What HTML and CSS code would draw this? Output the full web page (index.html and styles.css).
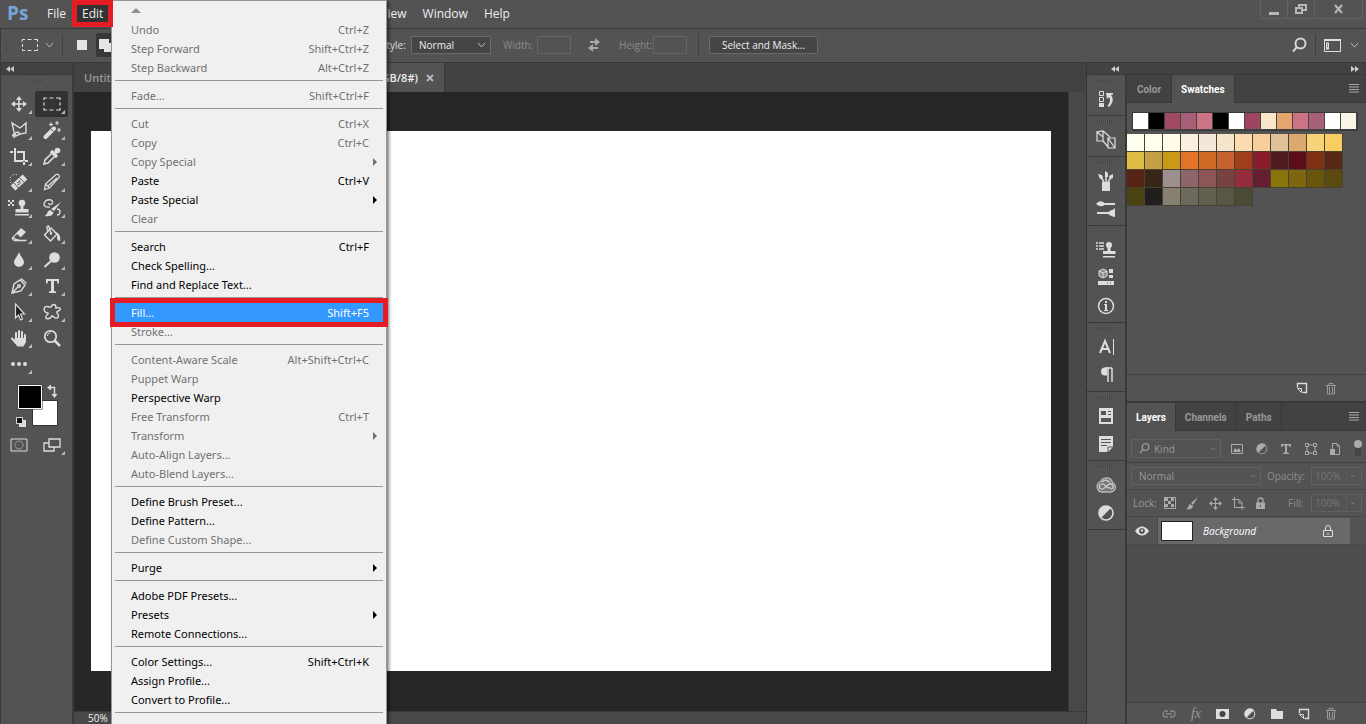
FILE: index.html
```
<!DOCTYPE html>
<html lang="en">
<head>
<meta charset="utf-8">
<title>Photoshop</title>
<link rel="stylesheet" href="styles.css">
</head>
<body>
<div class="app">
  <header class="menubar">
    <span class="brand">Ps</span>
    <nav class="menus">
      <button class="menu-name">File</button>
      <button class="menu-name open">Edit</button>
      <span class="menu-space"></span>
      <button class="menu-name">View</button>
      <button class="menu-name">Window</button>
      <button class="menu-name">Help</button>
    </nav>
    <div class="window-buttons">
      <button aria-label="Minimize"><svg width="12" height="14"><path d="M1 11.500h10" stroke="#b8b8b8" stroke-width="3"/></svg></button>
      <button aria-label="Restore"><svg width="14" height="14" fill="none" stroke="#b8b8b8" stroke-width="2"><path d="M5 6V3h7v5h-3M2 6h6v5H2z"/></svg></button>
      <button class="close" aria-label="Close"><svg width="12" height="12"><path d="M2 2l7 8M9 2l-7 8" stroke="#b8b8b8" stroke-width="2"/></svg></button>
    </div>
  </header>

  <div class="options">
    <div class="options-left">
      <span class="grip-v"></span>
      <button class="tool-preset" aria-label="Marquee preset"><svg width="18" height="14"><path d="M1 4V1.500h3M6.500 1.500h4M13 1.500h3.500V4M16.500 6v3M16.500 11v1.500H13M10.500 12.500h-4M4 12.500H1.500V11M1.500 9V6" fill="none" stroke="#ddd"/></svg><svg width="9" height="6"><path d="M1 1l3.500 4L8 1" fill="none" stroke="#bbb"/></svg></button>
      <span class="rule"></span>
      <button class="sel-mode" aria-label="New selection"><svg width="10" height="10"><path d="M0 0h10v10H0z" fill="#e6e6e6"/></svg></button>
      <button class="sel-mode active" aria-label="Add to selection"><svg width="16" height="16"><path d="M0 2h10v4h4v9H5v-3H0z" fill="#e6e6e6"/></svg></button>
    </div>
    <label for="style">Style:</label>
    <span class="select style-select"><select id="style"><option>Normal</option></select><svg width="9" height="6"><path d="M1 1l3.500 4L8 1" fill="none" stroke="#bbb"/></svg></span>
    <label class="dim" for="w">Width:</label><input class="size-box" id="w" type="text" disabled>
    <button class="swap" aria-label="Swap width and height"><svg width="16" height="14" fill="#a8a8a8"><path d="M4 3h5V0l5 4-5 4V5H4zM12 9H7V6l-5 4 5 4v-3h5z"/></svg></button>
    <label class="dim" for="h">Height:</label><input class="size-box" id="h" type="text" disabled>
    <span class="rule mask-rule"></span>
    <button class="mask-button">Select and Mask...</button>
    <div class="options-right">
      <button aria-label="Search"><svg width="16" height="16" fill="none" stroke="#d6d6d6" stroke-width="2"><circle cx="9.500" cy="6.500" r="5"/><path d="M6 10l-4 4.500"/></svg></button>
      <span class="rule"></span>
      <button class="workspace" aria-label="Workspace"><svg width="17" height="13"><path d="M.5 1h16v11.500H.5z" fill="none" stroke="#ddd"/><path d="M0 0h17v2H0z" fill="#ddd"/><path d="M2 3.500h3v7H2z" fill="#ddd"/><path d="M3 5.500h1M3 7.500h1" stroke="#555"/></svg></button>
      <svg width="9" height="6"><path d="M1 1l3.500 4L8 1" fill="none" stroke="#bbb"/></svg>
    </div>
  </div>

  <div class="body">
    <aside class="tools">
      <div class="collapse left"><svg width="8" height="6" fill="#ccc"><path d="M4 0v6L0 3zM8 0v6L4 3z"/></svg></div>
      <span class="grip"></span>
      <div class="tool-grid">
        <button class="tool" aria-label="Move"><svg viewBox="0 0 18 18"><path d="M9 3v12M3 9h12" stroke="#ddd" stroke-width="1.500"/><path d="M9 1l3 4H6zM9 17l3-4H6zM1 9l4-3v6zM17 9l-4-3v6z" fill="#ddd"/></svg></button>
        <button class="tool active" aria-label="Marquee"><svg viewBox="0 0 18 18"><path d="M1 5V3h3M6.500 3h4M13 3h4v2M17 7.500v3M17 13v2h-4M10.500 15h-4M4 15H1v-2M1 10.500v-3" fill="none" stroke="#ddd" stroke-width="1.200"/></svg></button>
        <button class="tool" aria-label="Polygonal lasso"><svg viewBox="0 0 18 18" fill="none" stroke="#ddd" stroke-width="1.400"><path d="M4 11L2 2l8 5 6-5v10l-6 1-2-2-4 1-1 2 3 1 4-2M6 11l-2 6M5 14l-3 1"/></svg></button>
        <button class="tool" aria-label="Magic wand"><svg viewBox="0 0 18 18"><path d="M2.500 16L11 7.500" stroke="#ddd" stroke-width="4" stroke-linecap="round"/><path d="M8 8l2.500 2.500" stroke="#555"/><path d="M8 1.500v4M6 3.500h4M14 0v4M12 2h4M16 7v4M14 9h4" stroke="#ddd" stroke-width="1.200"/></svg></button>
        <button class="tool" aria-label="Crop"><svg viewBox="0 0 18 18"><path d="M5 1v13h8M7 5h7v9" fill="none" stroke="#ddd" stroke-width="2"/><path d="M0 5h3M14 15v3M15 14h3" stroke="#ddd" stroke-width="2"/></svg></button>
        <button class="tool" aria-label="Eyedropper"><svg viewBox="0 0 18 18"><path d="M9 6L2 13l-1 4 4-1 7-7" fill="none" stroke="#ddd" stroke-width="1.600"/><path d="M8 4l6 6M11 7l4-4" stroke="#ddd" stroke-width="3.200"/><circle cx="14.500" cy="3.500" r="2.800" fill="#ddd"/></svg></button>
        <button class="tool" aria-label="Healing brush"><svg viewBox="0 0 18 18"><path d="M3 15L15 4" stroke="#ddd" stroke-width="7"/><path d="M4 10l4.500 5M9.500 4.500l4.500 5" stroke="#555"/><path d="M8 9.500h.1M10 10h.1M9.500 8h.1M8.500 11.500h.1" stroke="#555" stroke-width="1.600" stroke-linecap="round"/><path d="M1 10C-2 4 3 0 8 2" fill="none" stroke="#ddd" stroke-dasharray="1 1.500"/></svg></button>
        <button class="tool" aria-label="Pencil"><svg viewBox="0 0 18 18" fill="none" stroke="#ddd" stroke-width="1.300"><path d="M1.500 16.500l1-5.500L13 1.500c2-1 4 1 3 3L6.500 15zM2.500 11l4 4M5 13L14 5"/></svg></button>
        <button class="tool" aria-label="Clone stamp"><svg class="wide" viewBox="0 0 22 18"><circle cx="14" cy="4" r="3.300" fill="#ddd"/><path d="M12.500 6h3v4h5v3.500h-13V10h5zM7 15h14v1.500H7z" fill="#ddd"/><path d="M0 1h2v2H0zM4 1h2v2H4zM2 3h2v2H2zM0 5h2v2H0zM4 5h2v2H4z" fill="#ddd"/></svg></button>
        <button class="tool" aria-label="History brush"><svg viewBox="0 0 18 18"><path d="M18 3l-7 9-3-2z" fill="#ddd"/><path d="M7 11l3.500 2.500c-1 4-5 4-9 3.500 3-1 2.500-5 5.500-6z" fill="#ddd"/><path d="M7 8C2 9 0 6 1.500 3.500c2-4 9-3.500 8 .5-1 2-4 2-4 0M14 10c4 0 4 6 0 6" fill="none" stroke="#ddd" stroke-width="1.300"/></svg></button>
        <button class="tool" aria-label="Eraser"><svg viewBox="0 0 18 18"><path d="M2.500 12L11 3l5 4-8 8H5z" fill="#ddd"/><path d="M4 12l3-3 4 3.500-2 1.500H6z" fill="#555"/><path d="M2.500 12v2l2 1.500h12" fill="none" stroke="#ddd" stroke-width="1.300"/></svg></button>
        <button class="tool" aria-label="Paint bucket"><svg viewBox="0 0 18 18"><path d="M1.500 10L8 3l6 6-6.500 7zM8 8L5.500 1C3 1 4 4 5 6" fill="none" stroke="#ddd" stroke-width="1.400"/><circle cx="8" cy="8.500" r="1.300" fill="#ddd"/><path d="M11 7c5 0 7 4 6 9-3 0-3-3-3-6z" fill="#ddd"/></svg></button>
        <button class="tool" aria-label="Blur"><svg viewBox="0 0 18 18"><path d="M9 1c1 4 5 7 5 10a5 5 0 0 1-10 0c0-3 4-6 5-10z" fill="#ddd"/></svg></button>
        <button class="tool" aria-label="Dodge"><svg viewBox="0 0 18 18"><circle cx="11.500" cy="6.500" r="5.300" fill="#ddd"/><path d="M8 10l-6.500 6" stroke="#ddd" stroke-width="2"/></svg></button>
        <button class="tool" aria-label="Pen"><svg viewBox="0 0 18 18" fill="none" stroke="#ddd" stroke-width="1.400"><path d="M2 16l2-9 6-4 5 5-4 6zM2 16l6-6M11 1.500l5.500 5"/><circle cx="9" cy="9" r="1.300"/></svg></button>
        <button class="tool" aria-label="Type"><svg viewBox="0 0 18 18"><path d="M3 2h13v4.500h-1.500L14 4h-3v10l2 .5V16H6v-1.500l2-.5V4H5l-.5 2.500H3z" fill="#ddd"/></svg></button>
        <button class="tool" aria-label="Path selection"><svg viewBox="0 0 18 18"><path d="M5.500 1v14l3-3 2 5 2-1-2-5h4z" fill="#1c1c1c" stroke="#ddd" stroke-width="1.200"/></svg></button>
        <button class="tool" aria-label="Custom shape"><svg viewBox="0 0 18 18"><path d="M2 4c2-2 4 1 6 0 1-3 5-4 5 1 3-1 5 0 4 2-1 1-4 1-3 3 2 2 2 5 0 5-3 1-3-2-5-2-2 3-7 4-6 1 0-2 3-3 2-4-3 0-5-3-3-6z" fill="none" stroke="#ddd" stroke-width="1.400"/></svg></button>
        <button class="tool" aria-label="Hand"><svg viewBox="0 0 18 18"><path d="M6 10V4M9 10V2M12 10V3M15 11V6M6 14L2 9.500" stroke="#ddd" stroke-width="2" stroke-linecap="round"/><path d="M5 9h11v4l-2.500 4.500h-6L4 13z" fill="#ddd"/></svg></button>
        <button class="tool plain" aria-label="Zoom"><svg viewBox="0 0 18 18" fill="none" stroke="#ddd"><circle cx="7.500" cy="7.500" r="5.700" stroke-width="1.700"/><path d="M11.500 11.500L17 17" stroke-width="2.500"/><path d="M4.500 7c0-2 1-3 3-3"/></svg></button>
        <button class="tool" aria-label="More tools"><svg viewBox="0 0 18 18" fill="#ddd"><circle cx="3" cy="9" r="2"/><circle cx="9" cy="9" r="2"/><circle cx="15" cy="9" r="2"/></svg></button>
      </div>
      <svg class="color-chips" width="50" height="46"><path d="M37 4.500h5.500V12" fill="none" stroke="#ddd" stroke-width="1.400"/><path d="M35 4.500l4-3v6zM42.500 15l-3-4h6z" fill="#ddd"/><path d="M20.500 17.500h25v25h-25z" fill="#fff" stroke="#333"/><path d="M5.500 1.500h25v25h-25z" fill="#333"/><path d="M6.500 2.500h23v23h-23z" fill="#000" stroke="#fff"/><path d="M7 37h7v7H7z" fill="#ddd"/><path d="M4.500 34.500h6v6h-6z" fill="#111" stroke="#ddd"/></svg>
      <div class="mode-row">
        <button class="tool plain" aria-label="Quick mask"><svg viewBox="0 0 18 18" fill="none" stroke="#ddd"><path d="M1 3h16v12H1z"/><circle cx="9" cy="9" r="4" stroke-dasharray="1.200 1"/></svg></button>
        <button class="tool" aria-label="Screen mode"><svg viewBox="0 0 18 18" fill="none" stroke="#ddd" stroke-width="1.300"><path d="M6 3h11v8H6zM6 7H1v8h10v-4"/></svg></button>
      </div>
    </aside>

    <main class="document">
      <div class="doc-tabs">
        <button class="doc-tab">Untitled-1 @ 50% (RGB/8#)</button>
        <button class="doc-tab current">Untitled-2 @ 50% (RGB/8#)<svg width="8" height="8"><path d="M1 1l6 6M7 1L1 7" stroke="#b8b8b8" stroke-width="1.800"/></svg></button>
      </div>
      <div class="stage"><div class="viewport"><div class="paper"></div></div><div class="scroll-v"></div></div>
      <div class="status">50%</div>
    </main>

    <aside class="side">
      <div class="side-head"><svg width="8" height="6" fill="#ccc"><path d="M4 0v6L0 3zM8 0v6L4 3z"/></svg><svg width="8" height="6" fill="#ccc"><path d="M0 0v6l4-3zM4 0v6l4-3z"/></svg></div>
      <div class="side-body">
        <div class="dock">
          <div class="dock-group">
            <button aria-label="History"><svg viewBox="0 0 20 20"><path d="M3.500 2.500h4v4h-4zM3.500 8.500h4v4h-4z" fill="none" stroke="#ddd"/><path d="M3 14h5v4H3z" fill="#ddd"/><path d="M10 4h7v1.500l-2 .5c3 4 2 8-2 12l-1.500-1c3-4 3-7 1.500-9L11 10z" fill="#ddd"/></svg></button>
          </div>
          <div class="dock-group">
            <button aria-label="Paths preview"><svg viewBox="0 0 20 20" fill="none" stroke="#ddd" stroke-width="1.200"><path d="M1 2v9h6V7L1 2l6-1 7 6M12 8v10h7L12 8h7v10M7 11l6 7M7 2v5"/></svg></button>
          </div>
          <div class="dock-group">
            <button aria-label="Brush presets"><svg viewBox="0 0 20 20"><path d="M6 11h8v9H6z" fill="#ddd"/><path d="M8 11L5 6M10 11V5M12 11l3-5" stroke="#ddd" stroke-width="1.500"/><path d="M2 3l4 1 1 3-3 1zM9 0l3 2v4H9zM13 5l4-2v4l-3 1z" fill="#ddd"/></svg></button>
            <button aria-label="Brushes"><svg viewBox="0 0 20 20"><path d="M7 5h12M1 14h12" stroke="#ddd" stroke-width="2"/><path d="M0 5c4-4 7-3 9 0-2 3-5 3-9 0zM12 14c1-3 4-2 7-5v9c-3-1-6-1-7-4z" fill="#ddd"/></svg></button>
          </div>
          <div class="dock-group">
            <button aria-label="Clone source"><svg viewBox="0 0 20 20"><circle cx="13" cy="5" r="3" fill="#ddd"/><path d="M11.500 7h3v4h5v3H7v-3h4.500zM7 16h12v1.500H7z" fill="#ddd"/><path d="M0 3h2M3 3h5M0 6h2M3 6h5M0 9h2M3 9h5" stroke="#ddd" stroke-width="1.500"/></svg></button>
            <button aria-label="Libraries"><svg viewBox="0 0 20 20"><path d="M3 3l4-2 4 2v5l-4 2-4-2z" fill="#888" stroke="#ddd"/><path d="M3 3l4 2 4-2M7 5v5" fill="none" stroke="#ddd"/><path d="M13 1h4v4h-4zM13 7h4v3h-4zM2 13h16v4H2z" fill="#ddd"/><path d="M11 15h1M14 15h1" stroke="#555"/></svg></button>
            <button aria-label="Info"><svg viewBox="0 0 20 20"><circle cx="10" cy="10" r="7.500" fill="none" stroke="#ddd" stroke-width="1.500"/><path d="M9 5h2v2H9zM8 8h3v6h1v1H8v-1h1V9H8z" fill="#ddd"/></svg></button>
          </div>
          <div class="dock-group">
            <button aria-label="Character"><svg viewBox="0 0 20 20" fill="none" stroke="#ddd"><path d="M4 16L9 4l5 12M6 12h6" stroke-width="2"/><path d="M17.500 2v16"/></svg></button>
            <button aria-label="Paragraph"><svg viewBox="0 0 20 20"><path d="M16 2.500H9a4 4 0 0 0 0 8h2V3" fill="#ddd"/><path d="M12 3v14M16 3v14M9 3h7" stroke="#ddd" stroke-width="1.500"/></svg></button>
          </div>
          <div class="dock-group">
            <button aria-label="Properties"><svg viewBox="0 0 20 20"><path d="M3 2h14v16H3z" fill="#ddd"/><path d="M5 5h5v4H5zM12 5h3v1h-3zM12 8h3v1h-3zM5 12h10v4H5z" fill="#555"/></svg></button>
            <button aria-label="Notes"><svg viewBox="0 0 20 20"><path d="M3 2h14v11l-5 5H3z" fill="#ddd"/><path d="M5 5.500h10M5 8.500h10M5 11.500h6M12 18v-5h5" fill="none" stroke="#555"/></svg></button>
          </div>
          <div class="dock-group">
            <button aria-label="Creative Cloud"><svg viewBox="0 0 20 20"><path d="M6 17A5.500 5.500 0 0 1 4.500 6.500C8 1 15 2 16.500 7.500 21 10 20 16 15 17z" fill="#777" stroke="#bbb" stroke-width="1.300"/><path d="M15 13c-5 1-6-5-9.500-4C2 10 3 15 7 14c3-1 4-5 7-5 4 0 4 5 1 5M6 7c3-3 6-2 8 1" fill="none" stroke="#ccc" stroke-width="1.300"/></svg></button>
            <button aria-label="Adjustments"><svg viewBox="0 0 20 20"><circle cx="10" cy="10" r="7" fill="none" stroke="#ddd" stroke-width="1.600"/><path d="M15 5A7 7 0 1 0 5 15z" fill="#ddd"/></svg></button>
          </div>
        </div>

        <div class="panels">
          <section class="panel swatches">
            <div class="tabs"><button class="tab color-tab">Color</button><button class="tab on">Swatches</button><svg class="burger" width="10" height="9"><path d="M0 .5h10M0 3h10M0 5.500h10M0 8h10" stroke="#a8a8a8"/></svg></div>
            <div class="recent">
              <i style="background:#fff"></i><i style="background:#000"></i><i style="background:#a04a64"></i><i style="background:#a85f78"></i><i style="background:#cc7486"></i><i style="background:#000"></i><i style="background:#fff"></i><i style="background:#9f4461"></i><i style="background:#f8e6c8"></i><i style="background:#e5a56f"></i><i style="background:#ca7485"></i><i style="background:#a66078"></i><i style="background:#fff"></i><i style="background:#f9f4e6"></i>
            </div>
            <div class="palette">
              <i style="background:#fffff0"></i><i style="background:#fffff0"></i><i style="background:#fffde8"></i><i style="background:#faf0df"></i><i style="background:#f3e8d8"></i><i style="background:#f6e4cb"></i><i style="background:#fadbb2"></i><i style="background:#f8cf9c"></i><i style="background:#e1c199"></i><i style="background:#dba86e"></i><i style="background:#f7d276"></i><i style="background:#facd60"></i>
              <i style="background:#e0bd43"></i><i style="background:#c49f45"></i><i style="background:#cb9818"></i><i style="background:#e17426"></i><i style="background:#d06a26"></i><i style="background:#c5622f"></i><i style="background:#a33e1c"></i><i style="background:#8a1d2b"></i><i style="background:#501c20"></i><i style="background:#5b0d1a"></i><i style="background:#803014"></i><i style="background:#582815"></i>
              <i style="background:#562416"></i><i style="background:#352618"></i><i style="background:#9c908f"></i><i style="background:#8e656a"></i><i style="background:#8c5659"></i><i style="background:#784142"></i><i style="background:#962d3c"></i><i style="background:#651d30"></i><i style="background:#88740a"></i><i style="background:#806510"></i><i style="background:#67560b"></i><i style="background:#5b4a10"></i>
              <i style="background:#4a4414"></i><i style="background:#201f1d"></i><i style="background:#858071"></i><i style="background:#6c6a5d"></i><i style="background:#616050"></i><i style="background:#575747"></i><i style="background:#4b4a34"></i>
            </div>
            <div class="panel-foot">
              <button aria-label="New swatch"><svg width="12" height="12"><path d="M1.500 5.500v-4h9v9h-4" fill="none" stroke="#ddd" stroke-width="1.400"/><path d="M1.500 6.500h4v4z" fill="none" stroke="#ddd"/></svg></button>
              <button aria-label="Delete swatch"><svg width="12" height="13" fill="none" stroke="#999"><path d="M1 3.500h10M4 3V1.500h4V3M2.500 4v8h7V4M4.500 5v6M7.500 5v6"/></svg></button>
            </div>
          </section>

          <section class="panel layers">
            <div class="tabs"><button class="tab on layer-tab">Layers</button><button class="tab mid">Channels</button><button class="tab mid">Paths</button><svg class="burger" width="10" height="9"><path d="M0 .5h10M0 3h10M0 5.500h10M0 8h10" stroke="#a8a8a8"/></svg></div>
            <div class="filter-row">
              <span class="select kind"><svg width="11" height="11" fill="none" stroke="#999" stroke-width="1.300"><circle cx="6.500" cy="4" r="3.300"/><path d="M4 6.500L1 10"/></svg><select aria-label="Filter kind" disabled><option>Kind</option></select><svg width="5" height="4"><path d="M0 1l2 2 2-2" fill="none" stroke="#777"/></svg></span>
              <div class="filter-icons">
                <button aria-label="Pixel layers"><svg width="12" height="12"><path d="M.5 1.500h11v9H.5z" fill="none" stroke="#aaa"/><path d="M2 9l2-4 2 2 2-2 2 4z" fill="#aaa"/></svg></button>
                <button aria-label="Adjustment layers"><svg width="12" height="12"><circle cx="6" cy="6" r="4.800" fill="none" stroke="#999"/><path d="M10 2A5 5 0 1 0 2 10z" fill="#aaa"/></svg></button>
                <button aria-label="Type layers"><svg width="12" height="12"><path d="M1 1h10v3h-1L9 2.500H7v7l2 .5v1H3v-1l2-.5v-7H3L2 4H1z" fill="#aaa"/></svg></button>
                <button aria-label="Shape layers"><svg width="12" height="12" fill="none" stroke="#aaa"><path d="M3.500 2h5M3.500 10h5M2 3.500v5M10 3.500v5M.5.500h3v3h-3zM8.500.500h3v3h-3zM.5 8.500h3v3h-3zM8.500 8.500h3v3h-3z"/></svg></button>
                <button aria-label="Smart objects"><svg width="12" height="12"><path d="M3.500 6V.500H8L10.500 3v8.500H6M8 .500V3h2.500" fill="none" stroke="#aaa"/><path d="M1 6h5v6H1z" fill="#aaa"/></svg></button>
                <button class="filter-switch" aria-label="Toggle filter"><svg width="8" height="18"><path d="M1 4h6v12H1z" fill="#454545"/><circle cx="4" cy="4" r="4" fill="#aaa"/></svg></button>
              </div>
            </div>
            <div class="layer-row-opts">
              <span class="select blend"><select aria-label="Blend mode" disabled><option>Normal</option></select><svg width="5" height="4"><path d="M0 1l2 2 2-2" fill="none" stroke="#777"/></svg></span>
              <label class="dim" for="op">Opacity:</label><span class="amount"><input id="op" type="text" value="100%" disabled><svg width="5" height="4"><path d="M0 1l2 2 2-2" fill="none" stroke="#777"/></svg></span>
            </div>
            <div class="layer-row-opts">
              <span class="lock-label">Lock:</span>
              <div class="locks">
                <button aria-label="Lock transparency"><svg width="12" height="12"><path d="M.5.500h11v11H.5z" fill="none" stroke="#aaa"/><path d="M1 1h3v3H1zM7 1h3v3H7zM4 4h3v3H4zM1 7h3v3H1zM7 7h3v3H7z" fill="#aaa"/></svg></button>
                <button aria-label="Lock pixels"><svg width="13" height="13" fill="#aaa"><path d="M12 0L7 8 5 6zM4 7l3 2c0 3-4 4-7 3 3-1 2-4 4-5z"/></svg></button>
                <button aria-label="Lock position"><svg width="13" height="13"><path d="M6.500 1v11M1 6.500h11" stroke="#aaa"/><path d="M6.500 0l2.500 3H4zM6.500 13L9 10H4zM0 6.500L3 4v5zM13 6.500L10 4v5z" fill="#aaa"/></svg></button>
                <button aria-label="Lock artboards"><svg width="13" height="13" fill="none" stroke="#aaa"><path d="M2.500 0v10.500H13M0 2.500h7l3 3V13M7 3v3h3"/></svg></button>
                <button aria-label="Lock all"><svg width="11" height="13"><path d="M1 5.500h9V12H1z" fill="#aaa"/><path d="M3 6V3.500a2.500 2.500 0 0 1 5 0V6" fill="none" stroke="#aaa" stroke-width="1.400"/><path d="M5.500 8v2" stroke="#555"/></svg></button>
              </div>
              <label class="dim" for="fill">Fill:</label><span class="amount"><input id="fill" type="text" value="100%" disabled><svg width="5" height="4"><path d="M0 1l2 2 2-2" fill="none" stroke="#777"/></svg></span>
            </div>
            <div class="layer">
              <button class="eye" aria-label="Toggle visibility"><svg width="14" height="10"><path d="M0 5c4-6 10-6 14 0-4 6-10 6-14 0z" fill="#ddd"/><circle cx="7" cy="5" r="2.800" fill="#444"/><circle cx="7" cy="4.500" r="1.200" fill="#ddd"/></svg></button>
              <div class="layer-main"><span class="thumb"></span><span class="layer-name">Background</span><svg width="12" height="13" fill="none" stroke="#ddd"><path d="M1.500 5.500h9v6h-9zM3.500 5V3a2.500 2.500 0 0 1 5 0v2M6 8v2"/></svg></div>
            </div>
            <div class="layer-space"></div>
            <div class="panel-foot layer-foot">
              <button aria-label="Link layers"><svg width="14" height="10" fill="none" stroke="#8a8a8a" stroke-width="1.300"><path d="M6 2H4a3 3 0 0 0 0 6h2M8 2h2a3 3 0 0 1 0 6H8M4 5h6"/></svg></button>
              <button class="fx" aria-label="Layer style">fx</button>
              <button aria-label="Add mask"><svg width="13" height="10"><path d="M0 0h13v10H0z" fill="#ddd"/><circle cx="6.500" cy="5" r="3" fill="#444"/></svg></button>
              <button aria-label="Add adjustment"><svg width="12" height="12"><circle cx="6" cy="6" r="4.800" fill="none" stroke="#ddd"/><path d="M10 2A5 5 0 1 0 2 10z" fill="#ddd"/></svg></button>
              <button aria-label="New group"><svg width="12" height="10"><path d="M0 0h5l1 2h6v8H0z" fill="#ddd"/></svg></button>
              <button aria-label="New layer"><svg width="12" height="12"><path d="M1.500 5.500v-4h9v9h-4" fill="none" stroke="#ddd" stroke-width="1.400"/><path d="M1.500 6.500h4v4z" fill="none" stroke="#ddd"/></svg></button>
              <button aria-label="Delete layer"><svg width="12" height="13" fill="none" stroke="#999"><path d="M1 3.500h10M4 3V1.500h4V3M2.500 4v8h7V4M4.500 5v6M7.500 5v6"/></svg></button>
            </div>
          </section>
        </div>
      </div>
    </aside>
  </div>

  <div class="dropdown" role="menu">
    <div class="scroll-up"><svg width="10" height="5"><path d="M0 5l5-5 5 5z" fill="#909090"/></svg></div>
    <button disabled><span>Undo</span><kbd>Ctrl+Z</kbd></button>
    <button disabled><span>Step Forward</span><kbd>Shift+Ctrl+Z</kbd></button>
    <button disabled><span>Step Backward</span><kbd>Alt+Ctrl+Z</kbd></button>
    <hr>
    <button disabled><span>Fade...</span><kbd>Shift+Ctrl+F</kbd></button>
    <hr>
    <button disabled><span>Cut</span><kbd>Ctrl+X</kbd></button>
    <button disabled><span>Copy</span><kbd>Ctrl+C</kbd></button>
    <button class="sub" disabled><span>Copy Special</span></button>
    <button><span>Paste</span><kbd>Ctrl+V</kbd></button>
    <button class="sub"><span>Paste Special</span></button>
    <button disabled><span>Clear</span></button>
    <hr>
    <button><span>Search</span><kbd>Ctrl+F</kbd></button>
    <button><span>Check Spelling...</span></button>
    <button><span>Find and Replace Text...</span></button>
    <hr>
    <button class="chosen"><span>Fill...</span><kbd>Shift+F5</kbd></button>
    <button disabled><span>Stroke...</span></button>
    <hr>
    <button disabled><span>Content-Aware Scale</span><kbd>Alt+Shift+Ctrl+C</kbd></button>
    <button disabled><span>Puppet Warp</span></button>
    <button><span>Perspective Warp</span></button>
    <button disabled><span>Free Transform</span><kbd>Ctrl+T</kbd></button>
    <button class="sub" disabled><span>Transform</span></button>
    <button disabled><span>Auto-Align Layers...</span></button>
    <button disabled><span>Auto-Blend Layers...</span></button>
    <hr>
    <button><span>Define Brush Preset...</span></button>
    <button><span>Define Pattern...</span></button>
    <button disabled><span>Define Custom Shape...</span></button>
    <hr>
    <button class="sub"><span>Purge</span></button>
    <hr>
    <button><span>Adobe PDF Presets...</span></button>
    <button class="sub"><span>Presets</span></button>
    <button><span>Remote Connections...</span></button>
    <hr>
    <button><span>Color Settings...</span><kbd>Shift+Ctrl+K</kbd></button>
    <button><span>Assign Profile...</span></button>
    <button><span>Convert to Profile...</span></button>
    <hr>
    <button><span>Keyboard Shortcuts...</span><kbd>Alt+Shift+Ctrl+K</kbd></button>
  </div>
</div>
</body>
</html>
```
FILE: styles.css
```
* { box-sizing: border-box; }
body { margin: 0; font-family: "Open Sans", "Noto Sans", sans-serif; font-size: 10px; color: #ddd; background: #535353; }
button, input, select { font: inherit; color: inherit; background: none; border: 0; padding: 0; margin: 0; }
button { display: flex; align-items: center; justify-content: center; }
svg { display: block; flex: none; }

.app { position: relative; height: 100vh; overflow: hidden; display: flex; flex-direction: column; }

/* menu bar */
.menubar { flex: none; height: 28px; display: flex; background: #535353; }
.brand { width: 42px; padding-left: 7px; font: bold 19px/26px "Open Sans", sans-serif; color: #76a5d8; }
.menus { display: flex; align-items: flex-start; padding-top: 5px; font-size: 12px; }
.menu-name { height: 17px; padding: 0 5px; margin-right: 6px; color: #eee; }
.menu-name.open { position: relative; z-index: 20; background: #333; box-shadow: 0 0 0 5px #e51c23; }
.menu-space { width: 261px; }
.window-buttons { margin-left: auto; margin-right: 3px; display: flex; height: 19px; border: 1px solid #626262; border-top: 0; }
.window-buttons button { width: 27px; border-right: 1px solid #626262; }
.window-buttons .close { width: 47px; border: 0; }

/* options bar */
.options { flex: none; height: 35px; display: flex; align-items: center; padding-bottom: 1px; border-top: 1px solid #383838; border-bottom: 1px solid #383838; border-left: 1px solid #3a3a3a; background: #535353; }
.options-left { width: 380px; flex: none; display: flex; align-items: center; }
.grip-v { width: 3px; height: 18px; margin: 0 12px 0 5px; background: repeating-linear-gradient(#444 0 1px, #5c5c5c 1px 2px); }
.tool-preset { gap: 6px; }
.rule { width: 1px; height: 22px; background: #404040; }
.options-left .rule { margin: 0 8px; }
.sel-mode { width: 22px; height: 24px; }
.sel-mode.active { margin-left: 3px; background: #383838; border-radius: 2px; }
.options label { width: 30px; white-space: nowrap; }
.dim { color: #8c8c8c; }
.select { display: flex; align-items: center; border: 1px solid #6a6a6a; padding-right: 4px; }
.select select { appearance: none; flex: 1; min-width: 0; opacity: 1; }
.style-select { width: 80px; height: 18px; margin-right: 12px; padding-left: 7px; background: #454545; color: #eee; }
.options label.dim { width: 34px; }
.size-box { width: 34px; height: 18px; border: 1px solid #666; }
.swap { width: 48px; padding-right: 2px; }
.mask-rule { margin: 0 10px 0 11px; }
.mask-button { height: 18px; width: 109px; background: #454545; border: 1px solid #6a6a6a; color: #eee; border-radius: 2px; white-space: nowrap; }
.options-right { margin-left: auto; display: flex; align-items: center; gap: 8px; padding-right: 7px; }
.options-right .workspace { margin-right: 1px; }

.body { flex: 1; min-height: 0; display: flex; }
.collapse, .side-head { flex: none; height: 12px; background: #424242; border-bottom: 1px solid #383838; display: flex; align-items: center; }
.grip { display: block; width: 20px; height: 3px; background: repeating-linear-gradient(90deg, #444 0 1px, #5c5c5c 1px 2px); }

/* tools */
.tools { flex: none; width: 74px; border-left: 1px solid #3a3a3a; border-right: 2px solid #3a3a3a; background: #535353; }
.collapse { padding-left: 5px; }
.tools .grip { margin: 4px auto 9px 25px; }
.tool-grid, .mode-row { display: grid; grid-template-columns: 33px 33px; padding-left: 1px; }
.tool { position: relative; height: 26px; }
.tool svg { width: 18px; height: 18px; }
.tool svg.wide { width: 22px; }
.tool.active { background: #333; border-radius: 2px; }
.tool::after { content: ""; position: absolute; right: 3px; bottom: 3px; border: 2px solid transparent; border-right-color: #bbb; border-bottom-color: #bbb; }
.tool.plain::after { display: none; }
.color-chips { margin: 6px 0 3px 11px; }

/* document */
.document { flex: 1; min-width: 0; display: flex; flex-direction: column; background: #424242; }
.doc-tabs { flex: none; height: 29px; display: flex; width: 371px; }
.doc-tab { flex: 1; justify-content: flex-start; padding: 0 10px; font-size: 11px; font-weight: 600; color: #999; white-space: nowrap; border-right: 1px solid #383838; }
.doc-tab.current { background: #535353; color: #eee; justify-content: flex-end; gap: 8px; }
.stage { flex: 1; min-height: 0; display: flex; }
.viewport { flex: 1; display: flex; padding: 39px 17px 40px; background: #272727; }
.paper { flex: 1; background: #fff; }
.scroll-v { width: 18px; background: #484848; border-left: 1px solid #383838; }
.status { flex: none; height: 13px; padding-left: 14px; line-height: 12px; background: #484848; border-top: 1px solid #3a3a3a; color: #eee; }

/* right side */
.side { flex: none; width: 280px; display: flex; flex-direction: column; border-left: 1px solid #333; }
.side-head { justify-content: space-between; padding: 0 7px 0 24px; }
.side-body { flex: 1; min-height: 0; display: flex; }
.dock { flex: none; width: 40px; background: #535353; border-right: 2px solid #383838; }
.dock-group { padding: 4px 0 2px; border-bottom: 1px solid #383838; }
.dock-group::before { content: ""; display: block; width: 20px; height: 3px; margin: 0 auto 3px 10px; background: repeating-linear-gradient(90deg, #444 0 1px, #5c5c5c 1px 2px); }
.dock-group button { width: 100%; height: 28px; }
.dock-group svg { width: 20px; height: 20px; }

.panels { flex: 1; min-width: 0; display: flex; flex-direction: column; background: #535353; }
.swatches { flex: none; height: 328px; display: flex; flex-direction: column; border-bottom: 2px solid #383838; }
.tabs { flex: none; height: 28px; display: flex; align-items: center; background: #424242; border-bottom: 1px solid #383838; }
.tab { align-self: stretch; padding: 0 9px; margin-bottom: -1px; font-family: Roboto, sans-serif; font-weight: 700; color: #999; border-right: 1px solid #383838; }
.tab.on { background: #535353; color: #fff; }
.color-tab { width: 45px; }
.burger { margin-left: auto; margin-right: 7px; }
.recent { display: flex; align-self: flex-start; margin: 9px 0 3px 5px; border: 1px solid #383838; }
.recent i { width: 16px; height: 17px; border-right: 1px solid #444; border-bottom: 1px solid #444; }
.palette { display: grid; grid-template-columns: repeat(12, 18px); }
.palette i { height: 18px; border-right: 1px solid #4a4034; border-bottom: 1px solid #4a4034; }
.panel-foot { margin-top: auto; height: 27px; display: flex; align-items: center; justify-content: flex-end; gap: 17px; padding-right: 29px; border-top: 1px solid #404040; }

.layers { flex: 1; min-height: 0; display: flex; flex-direction: column; }
.filter-row { flex: none; height: 32px; display: flex; align-items: center; padding: 4px 4px 0; border-bottom: 1px solid #404040; color: #999; }
.kind { width: 90px; height: 19px; padding-left: 7px; gap: 4px; }
.layers .select, .amount { border-color: #606060; }
.filter-icons { flex: 1; display: flex; justify-content: space-between; align-items: center; margin-left: 10px; }
.layer-row-opts { flex: none; height: 27px; display: flex; align-items: center; justify-content: space-between; padding: 0 4px; border-bottom: 1px solid #484848; color: #999; }
.blend { width: 130px; height: 18px; padding-left: 7px; }
.amount { display: flex; align-items: center; width: 51px; height: 18px; border: 1px solid #606060; padding: 0 4px 0 3px; }
.amount input { width: 32px; margin-right: 4px; border-right: 1px solid #606060; color: #777; }
.lock-label { padding-left: 2px; }
.locks { display: flex; gap: 10px; margin-right: 14px; align-items: center; }
.layer { flex: none; height: 26px; margin-top: 1px; display: flex; }
.eye { width: 31px; border-right: 1px solid #484848; }
.layer-main { flex: 1; margin-right: 16px; background: #696969; display: flex; align-items: center; padding: 0 16px 0 3px; }
.thumb { width: 32px; height: 20px; background: #fff; border: 1px solid #222; margin-right: 10px; }
.layer-name { flex: 1; font-style: italic; font-size: 10px; color: #fff; }
.layer-space { flex: 1; background: #4d4d4d; border-top: 1px solid #484848; }
.layer-foot { flex: none; height: 22px; gap: 15px; }
.fx { font: italic 14px/16px "Liberation Serif", serif; color: #999; }

/* Edit menu */
.dropdown { position: absolute; z-index: 10; left: 111px; top: 0; width: 276px; padding: 0 3px; background: #f0f0f0; border: 1px solid #979797; border-bottom: 0; box-shadow: 2px 2px 3px rgba(0, 0, 0, .5); font-family: "Noto Sans", sans-serif; font-size: 11px; color: #000; }
.scroll-up { height: 19px; padding: 7px 16px 0; }
.dropdown button { width: 100%; height: 19px; padding: 0 14px 0 16px; justify-content: space-between; white-space: nowrap; }
.dropdown button:disabled { color: #707070; }
.dropdown kbd { font: inherit; }
.dropdown hr { height: 9px; margin: 0; border: 0; background: linear-gradient(#979797, #979797) 0 3px / 100% 1px no-repeat; }
.dropdown .sub { padding-right: 6px; }
.sub::after { content: ""; border: 4px solid transparent; border-left-color: currentColor; border-right: 0; }
.dropdown .chosen { position: relative; z-index: 1; background: #3399ff; color: #fff; box-shadow: 0 0 0 5px #e51c23; }
```
